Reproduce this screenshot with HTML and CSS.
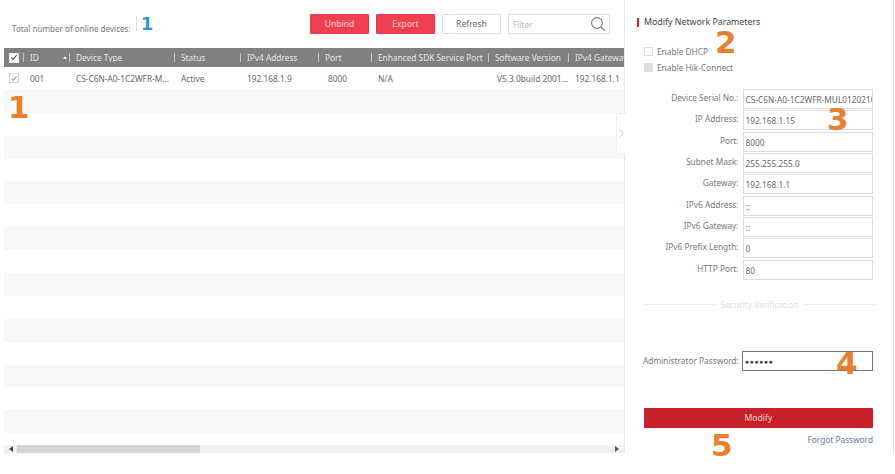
FILE: index.html
```html
<!DOCTYPE html>
<html lang="en">
<head>
  <meta charset="UTF-8" />
  <title>Online Devices</title>
  <link rel="stylesheet" href="styles.css">
</head>
<body>
  <div class="app">
    <div class="list">
      <div class="toolbar">
        <div class="total">
          <span class="total-label">Total number of online devices:</span>
          <span class="total-count">1</span>
        </div>
        <div class="actions">
          <button class="btn btn-red">Unbind</button>
          <button class="btn btn-red">Export</button>
          <button class="btn">Refresh</button>
          <div class="filter">
            <span>Filter</span>
            <svg width="16" height="16" viewBox="0 0 16 16" fill="none" stroke="#777" stroke-width="1.1">
              <circle cx="7" cy="7" r="5.4" />
              <path d="M11 11l3.6 3.6" />
            </svg>
          </div>
        </div>
      </div>

      <div class="table">
        <div class="row head">
          <div class="cell"><span class="check check-on">
            <svg width="9" height="9" viewBox="0 0 9 9" fill="none" stroke="#555" stroke-width="1.3"><path d="M1.5 4.5l2 2.2 4-5" /></svg>
          </span></div>
          <div class="cell sep">ID<span class="sort"></span></div>
          <div class="cell sep">Device Type</div>
          <div class="cell sep">Status</div>
          <div class="cell sep">IPv4 Address</div>
          <div class="cell sep">Port</div>
          <div class="cell sep">Enhanced SDK Service Port</div>
          <div class="cell sep">Software Version</div>
          <div class="cell sep">IPv4 Gateway</div>
        </div>
        <div class="row">
          <div class="cell"><span class="check">
            <svg width="9" height="9" viewBox="0 0 9 9" fill="none" stroke="#777" stroke-width="1"><path d="M1.5 4.5l2 2.2 4-5" /></svg>
          </span></div>
          <div class="cell">001</div>
          <div class="cell">CS-C6N-A0-1C2WFR-M...</div>
          <div class="cell">Active</div>
          <div class="cell">192.168.1.9</div>
          <div class="cell cell-port">8000</div>
          <div class="cell">N/A</div>
          <div class="cell cell-version">V5.3.0build 2001...</div>
          <div class="cell">192.168.1.1</div>
        </div>
        <div class="row"></div><div class="row"></div><div class="row"></div>
        <div class="row"></div><div class="row"></div><div class="row"></div>
        <div class="row"></div><div class="row"></div><div class="row"></div>
        <div class="row"></div><div class="row"></div><div class="row"></div>
        <div class="row"></div><div class="row"></div><div class="row"></div>
        <div class="row"></div>
      </div>

      <div class="scrollbar">
        <span class="arrow arrow-left"></span>
        <div class="track"><div class="thumb"></div></div>
        <span class="arrow arrow-right"></span>
      </div>
    </div>

    <div class="panel">
      <div class="collapse">
        <svg width="6" height="11" viewBox="0 0 6 11" fill="none" stroke="#ccc" stroke-width="1"><path d="M1 1l4 4.5-4 4.5" /></svg>
      </div>

      <h3 class="title">Modify Network Parameters</h3>
      <label class="option"><span class="box"></span>Enable DHCP</label>
      <label class="option"><span class="box box-off"></span>Enable Hik-Connect</label>

      <div class="fields">
        <div class="field"><span>Device Serial No.:</span><div class="input">CS-C6N-A0-1C2WFR-MUL012021001</div></div>
        <div class="field"><span>IP Address:</span><div class="input">192.168.1.15</div></div>
        <div class="field"><span>Port:</span><div class="input">8000</div></div>
        <div class="field"><span>Subnet Mask:</span><div class="input">255.255.255.0</div></div>
        <div class="field"><span>Gateway:</span><div class="input">192.168.1.1</div></div>
        <div class="field"><span>IPv6 Address:</span><div class="input">::</div></div>
        <div class="field"><span>IPv6 Gateway:</span><div class="input">::</div></div>
        <div class="field"><span>IPv6 Prefix Length:</span><div class="input">0</div></div>
        <div class="field"><span>HTTP Port:</span><div class="input">80</div></div>
      </div>

      <div class="divider"><span>Security Verification</span></div>

      <div class="password">
        <span>Administrator Password:</span>
        <div class="input input-dark">&#9679;&#9679;&#9679;&#9679;&#9679;&#9679;</div>
      </div>

      <button class="modify">Modify</button>
      <a class="forgot">Forgot Password</a>
    </div>

    <span class="num num-1">1</span>
    <span class="num num-2">2</span>
    <span class="num num-3">3</span>
    <span class="num num-4">4</span>
    <span class="num num-5">5</span>
  </div>
</body>
</html>
```

FILE: styles.css
```css
body {
  margin: 0;
  background: #fff;
  color: #666;
  font-family: "Noto Sans", "Open Sans", sans-serif;
  font-size: 8.3px;
  overflow: hidden;
}

.app {
  position: relative;
  display: flex;
  width: 895px;
  height: 474px;
}

/* left side */
.list {
  width: 620px;
  margin-left: 4px;
  height: 454px;
  flex: none;
}

.toolbar {
  display: flex;
  justify-content: space-between;
  height: 48px;
}

.total {
  display: flex;
  align-items: flex-start;
  padding: 16px 0 0 8px;
}

.total-label {
  margin-top: 8px;
  font-size: 8.1px;
  color: #777;
  height: 10px;
  line-height: 10px;
}

.total-count {
  margin-left: 5px;
  padding-left: 4px;
  border-left: 1px solid #ddd;
  font-family: "DejaVu Sans", sans-serif;
  font-size: 18px;
  line-height: 15px;
  font-weight: 700;
  color: #2a9bd8;
}

.actions {
  display: flex;
  gap: 7px;
  padding: 14px 14px 0 0;
  height: 20px;
}

.btn {
  width: 59px;
  height: 20px;
  padding: 0;
  border: 1px solid #ddd;
  border-radius: 1px;
  background: #fff;
  color: #666;
  font: inherit;
  font-size: 8.6px;
}

.btn-red {
  background: #f0404f;
  border-color: #e33a48;
  color: #ffd6d9;
}

.filter {
  width: 102px;
  height: 20px;
  box-sizing: border-box;
  border: 1px solid #ddd;
  display: flex;
  align-items: center;
  justify-content: space-between;
  padding: 0 3px 0 4px;
  color: #bbb;
}

.table {
  height: 387px;
  overflow: hidden;
}

.row {
  display: grid;
  grid-template-columns: 19px 46px 105px 66px 78px 53px 117px 80px 56px;
  height: 22.9px;
  align-items: center;
  white-space: nowrap;
}

.row:nth-child(odd) {
  background: #f7f7f7;
}

.row.head {
  height: 19px;
  background: #808080;
  color: #e6e6e6;
}

.cell {
  padding-left: 7px;
  overflow: hidden;
}

.row .cell:first-child {
  padding-left: 5px;
  display: flex;
}

.cell-port {
  padding-left: 10px;
}

.cell-version {
  padding-left: 9px;
}

.sep {
  display: flex;
  align-items: center;
  padding-left: 6px;
  border-left: 1px solid #c4c4c4;
  height: 9px;
  line-height: 9px;
}

.sort {
  margin-left: 24px;
  border: 2.5px solid transparent;
  border-top: 0;
  border-bottom: 3px solid #e6e6e6;
}

.check {
  width: 8px;
  height: 8px;
  border: 1px solid #d4d4d4;
  background: #fff;
  display: flex;
  align-items: center;
  justify-content: center;
}

.check-on {
  border-color: #eee;
}

/* bottom scrollbar */
.scrollbar {
  display: flex;
  align-items: center;
  height: 8px;
  margin-top: 10px;
  background: #f1f1f1;
}

.track {
  flex: 1;
  height: 8px;
}

.thumb {
  width: 183px;
  height: 8px;
  background: #d4d4d4;
}

.arrow {
  flex: none;
  width: 0;
  border: 3px solid transparent;
}

.arrow-left {
  margin: 0 4px 0 5px;
  border-left: 0;
  border-right: 4px solid #444;
}

.arrow-right {
  margin: 0 5px 0 4px;
  border-right: 0;
  border-left: 4px solid #555;
}

/* right side */
.panel {
  position: relative;
  width: 270px;
  height: 454px;
  box-sizing: border-box;
  padding: 0 20px 0 19px;
  border-left: 1px solid #e6e6e6;
  border-right: 1px solid #e2e2e2;
  flex: none;
}

.collapse {
  position: absolute;
  left: -9px;
  top: 113px;
  width: 9px;
  height: 41px;
  display: flex;
  align-items: center;
  justify-content: center;
  background: #fff;
  border: 1px solid #eee;
  border-right: 0;
  box-sizing: border-box;
}

.title {
  margin: 18px 0 0 -7px;
  padding-left: 5px;
  height: 9px;
  line-height: 9px;
  border-left: 2px solid #c8202a;
  font-size: 8.8px;
  font-weight: 400;
  color: #444;
}

.option {
  display: flex;
  align-items: center;
  gap: 4px;
  height: 10px;
  margin-bottom: 6.5px;
  color: #777;
}

.title + .option {
  margin-top: 19px;
}

.box {
  width: 7px;
  height: 7px;
  border: 1px solid #ddd;
}

.box-off {
  background: #ddd;
}

.fields {
  margin-top: 16.5px;
}

.field {
  display: flex;
  height: 20px;
  margin-bottom: 1.35px;
}

.field > span {
  width: 95px;
  margin-top: 3px;
  text-align: right;
  color: #777;
  white-space: nowrap;
}

.input {
  box-sizing: border-box;
  width: 131px;
  height: 20px;
  margin-left: 4px;
  padding-left: 2px;
  line-height: 20px;
  border: 1px solid #ddd;
  overflow: hidden;
  white-space: nowrap;
  color: #666;
}

.divider {
  display: flex;
  align-items: center;
  gap: 6px;
  margin-top: 19px;
  color: #ddd;
  width: 231px;
}

.divider::before,
.divider::after {
  content: "";
  flex: 1;
  height: 1px;
  background: #eee;
}

.password {
  display: flex;
  align-items: center;
  margin-top: 41px;
  margin-left: -1px;
  color: #777;
  white-space: nowrap;
}

.input-dark {
  margin-left: 3px;
  border-color: #777;
  font-size: 7px;
  letter-spacing: 0.5px;
  color: #444;
}

.modify {
  display: block;
  width: 229px;
  height: 20px;
  margin-top: 37px;
  padding: 0;
  border: 0;
  border-radius: 1px;
  background: #c8202a;
  color: #f6d4d6;
  font: inherit;
  font-size: 8.6px;
}

.forgot {
  display: block;
  width: 229px;
  margin-top: 6px;
  text-align: right;
  color: #5f7d9e;
}

/* orange step numbers laid over the screenshot */
.num {
  position: absolute;
  font-family: "DejaVu Sans", sans-serif;
  font-size: 31px;
  line-height: 32px;
  font-weight: 700;
  color: #e8802f;
}

.num-1 { left: 8px; top: 91px; }
.num-2 { left: 715px; top: 26px; }
.num-3 { left: 827px; top: 103px; }
.num-4 { left: 836px; top: 347px; }
.num-5 { left: 711px; top: 429px; }
```
